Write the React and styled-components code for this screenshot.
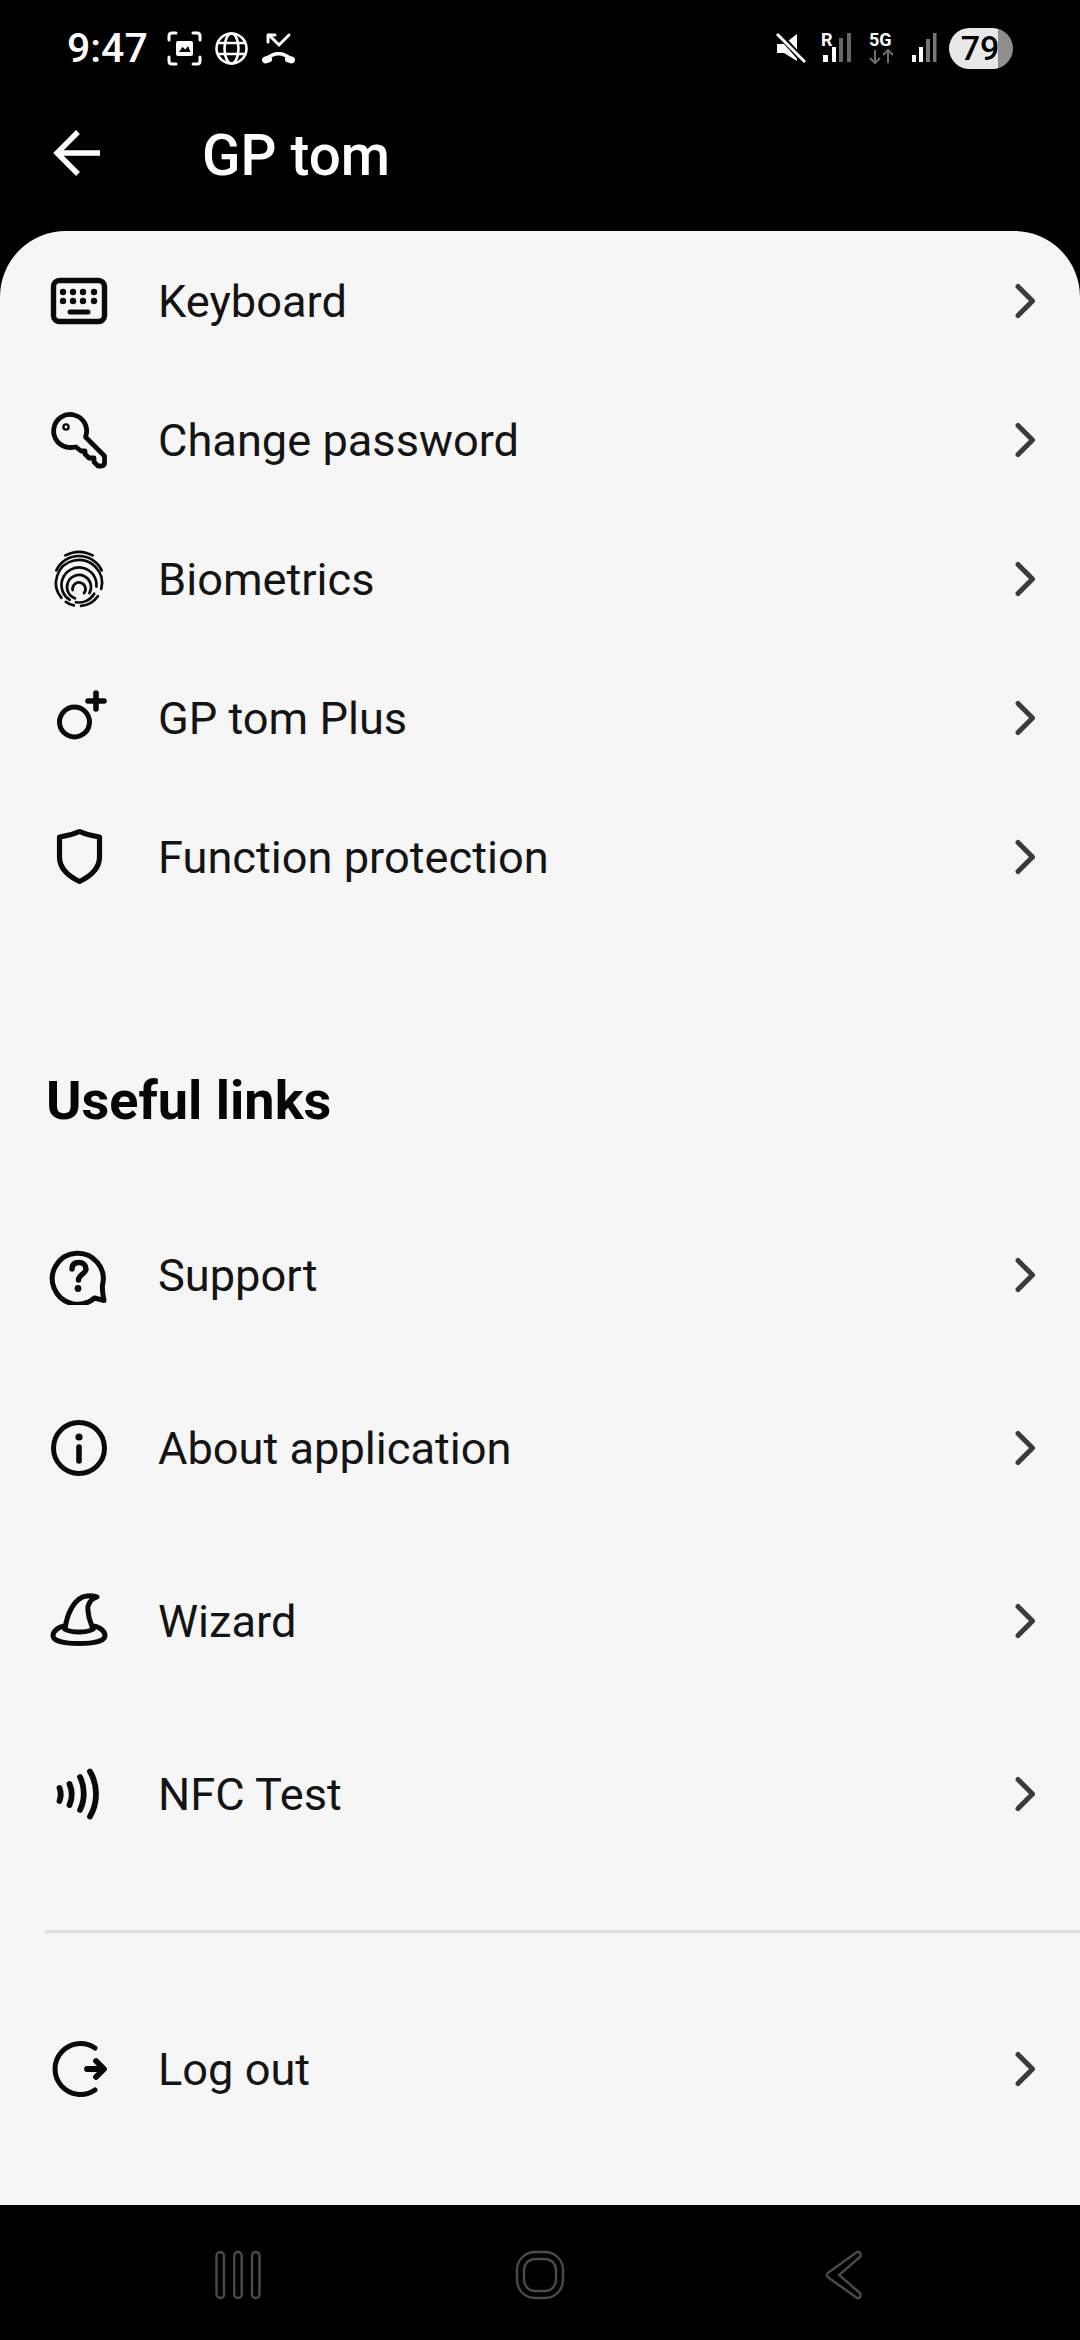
import React from "react";
import styled, { createGlobalStyle } from "styled-components";

const Global = createGlobalStyle`
  html, body { margin: 0; padding: 0; background: #000; }
  * { box-sizing: border-box; }
`;

const Screen = styled.div`
  width: 1080px;
  height: 2340px;
  background: #000;
  display: flex;
  flex-direction: column;
  font-family: Roboto, "Liberation Sans", sans-serif;
  overflow: hidden;
`;

const StatusBar = styled.div`
  height: 96px;
  padding: 0 67px;
  display: flex;
  align-items: center;
  justify-content: space-between;
  color: #fff;
`;

const StatusGroup = styled.div`
  display: flex;
  align-items: center;
  gap: ${(p) => p.$gap}px;
`;

const Time = styled.span`
  font-size: 41px;
  font-weight: 500;
  margin-right: 6px;
`;

const Battery = styled.div`
  width: 64px;
  height: 41px;
  border-radius: 21px;
  background: linear-gradient(90deg, #e8e8e8 0 49px, #8e8e8e 49px);
  color: #000;
  font-size: 34px;
  font-weight: 500;
  display: flex;
  align-items: center;
  justify-content: center;
  padding-right: 2px;
  margin-left: -3px;
`;

const AppBar = styled.div`
  height: 135px;
  padding: 0 0 22px 53px;
  display: flex;
  align-items: center;
  color: #fff;
`;

const Title = styled.h1`
  font-size: 56.5px;
  font-weight: 500;
  margin: 7px 0 0 101px;
  line-height: 1;
`;

const Sheet = styled.div`
  height: 1974px;
  background: #f6f6f6;
  border-radius: 66px 66px 0 0;
  display: flex;
  flex-direction: column;
`;

const Row = styled.div`
  height: ${(p) => p.$h}px;
  padding: 0 41px 0 49px;
  display: flex;
  align-items: center;
  flex-shrink: 0;
`;

const Spacer = styled.div`
  height: ${(p) => p.$h}px;
  flex-shrink: 0;
`;

const IconBox = styled.div`
  width: 60px;
  height: 60px;
  flex-shrink: 0;
  margin-right: 49px;
  svg { display: block; }
`;

const Label = styled.span`
  flex: 1;
  font-size: 45.2px;
  color: #141414;
  line-height: 1;
  padding-top: 2px;
`;

const Heading = styled.h2`
  height: 140px;
  margin: 0;
  padding: 0 0 2px 46px;
  display: flex;
  align-items: center;
  font-size: 54px;
  font-weight: 700;
  color: #050505;
  flex-shrink: 0;
`;

const Divider = styled.div`
  height: 3px;
  margin-left: 45px;
  background: #dfdfdf;
  flex-shrink: 0;
`;

const NavBar = styled.div`
  flex: 1;
  display: flex;
  align-items: center;
  gap: 254px;
  padding: 5px 0 0 215px;
`;

const Chevron = () => (
  <svg width="30" height="42" viewBox="0 0 30 42" fill="none" stroke="#3a3a3a" strokeWidth="5" strokeLinecap="round" strokeLinejoin="round">
    <path d="M9 6.5 L23.5 21 L9 35.5" />
  </svg>
);

const Ico = ({ children }) => (
  <svg width="60" height="60" viewBox="0 0 60 60" fill="none" stroke="#0a0a0a" strokeWidth="5" strokeLinecap="round" strokeLinejoin="round">
    {children}
  </svg>
);

// arc path on a circle, angles in degrees, clockwise on screen
const arc = (cx, cy, r, a0, a1) => {
  const pt = (a) => {
    const t = (a * Math.PI) / 180;
    return `${(cx + r * Math.cos(t)).toFixed(2)} ${(cy + r * Math.sin(t)).toFixed(2)}`;
  };
  return `M${pt(a0)} A${r} ${r} 0 ${a1 - a0 > 180 ? 1 : 0} 1 ${pt(a1)}`;
};

const KeyboardIcon = () => (
  <Ico>
    <rect x="4.5" y="9.5" width="51" height="41" rx="6" strokeWidth="5.4" />
    <g fill="#0a0a0a" stroke="none">
      {[14, 24, 34, 45].map((x) => (
        <React.Fragment key={x}>
          <circle cx={x} cy="21" r="3.2" />
          <circle cx={x} cy="30" r="3.2" />
        </React.Fragment>
      ))}
    </g>
    <path d="M21 41 H39" strokeWidth="5" />
  </Ico>
);

const KeyIcon = () => (
  <Ico>
    <path d="M36.5 27 L55.5 46 V53 Q55.5 56 52 56 H49 L45 52 V48 H40 L36 44 V41 H32 L27 37 C24 37.5 22 37.5 21 37.5 A16.5 16.5 0 1 1 36.5 27 Z" strokeWidth="4.8" />
    <circle cx="17" cy="17" r="2.6" strokeWidth="2.4" />
  </Ico>
);

const FingerprintIcon = () => (
  <Ico>
    <g strokeWidth="2.7">
      <path d={arc(30, 32, 29, -118, -62)} />
      <path d={arc(30, 32, 25, -155, -25)} />
      <path d={arc(30, 34, 23, 140, 375)} />
      <path d={arc(30, 34, 23, 35, 85)} />
      <path d={arc(30, 34, 23, 103, 125)} />
      <path d={arc(30, 36, 17.5, 122, 365)} />
      <path d={arc(30, 36, 17.5, 30, 100)} />
      <path d={arc(30, 38, 12, 110, 390)} />
      <path d={arc(30, 40, 6.5, 170, 400)} />
    </g>
  </Ico>
);

const PlusIcon = () => (
  <Ico>
    <circle cx="25.5" cy="34" r="15" />
    <path d="M47 5 V21 M39 13 H55" strokeWidth="5.6" />
  </Ico>
);

const ShieldIcon = () => (
  <Ico>
    <path d="M10.5 10 C18 9 25 7 30.5 4.5 C36 7 43 9 50.5 10 V30 C50.5 42 42 49 30.5 54.5 C19 49 10.5 42 10.5 30 Z" strokeWidth="5.2" />
  </Ico>
);

const SupportIcon = () => (
  <Ico>
    <path d="M55 55.5 L45.5 53 A25.5 25.5 0 1 1 53.5 40 C53 45 54 50 55 55.5 Z" strokeWidth="5" />
    <path d="M23 24 C23 19 26 17.5 30 17.5 C34 17.5 37 20 37 24 C37 29 29.5 29.5 29.5 35" strokeWidth="5.4" />
    <circle cx="29" cy="43.5" r="3.4" fill="#0a0a0a" stroke="none" />
  </Ico>
);

const InfoIcon = () => (
  <Ico>
    <circle cx="30" cy="30" r="25.5" />
    <circle cx="30" cy="19" r="3.6" fill="#0a0a0a" stroke="none" />
    <path d="M30 29 V43" strokeWidth="5.6" />
  </Ico>
);

const WizardIcon = () => (
  <Ico>
    <path d="M16 38 C18 22 26 6 38 5 C42 4.5 46 5 48 6 C42 8 38 13 39 20 C39.5 28 42 32 44 38" />
    <path d="M16 35 C8 36 4 41 4 44.5 C4 50 15 52.5 30 52.5 C45 52.5 56 50 56 44.5 C56 41 52 36 44 35" />
    <path d="M16 38 C22 42 38 42 44 38" />
  </Ico>
);

const NfcIcon = () => (
  <Ico>
    <g strokeWidth="5.8">
      <path d="M10.5 24 C12 28 12 33 10.5 37" />
      <path d="M20.5 20 C23.5 27 23.5 34 20.5 41" />
      <path d="M31 13 C36 23 36 36 31 46" />
      <path d="M41 7.5 C49 21 49 39 41 52.5" />
    </g>
  </Ico>
);

const LogoutIcon = () => (
  <Ico>
    <path d="M46 9 A25.5 25.5 0 1 0 46 51" />
    <path d="M38 30 H54 M47 22 L55 30 L47 38" strokeWidth="5.8" />
  </Ico>
);

const top = [
  { label: "Keyboard", icon: <KeyboardIcon /> },
  { label: "Change password", icon: <KeyIcon /> },
  { label: "Biometrics", icon: <FingerprintIcon /> },
  { label: "GP tom Plus", icon: <PlusIcon /> },
  { label: "Function protection", icon: <ShieldIcon /> },
];

const links = [
  { label: "Support", icon: <SupportIcon /> },
  { label: "About application", icon: <InfoIcon /> },
  { label: "Wizard", icon: <WizardIcon /> },
  { label: "NFC Test", icon: <NfcIcon /> },
];

const MenuRow = ({ label, icon, h }) => (
  <Row $h={h}>
    <IconBox>{icon}</IconBox>
    <Label>{label}</Label>
    <Chevron />
  </Row>
);

export default function App() {
  return (
    <Screen>
      <Global />
      <StatusBar>
        <StatusGroup $gap={13}>
          <Time>9:47</Time>
          <svg width="35" height="35" viewBox="0 0 35 35" fill="none" stroke="#fff" strokeWidth="3" strokeLinecap="round">
            <path d="M2 9 V5 Q2 2 5 2 H9 M26 2 H30 Q33 2 33 5 V9 M33 26 V30 Q33 33 30 33 H26 M9 33 H5 Q2 33 2 30 V26" />
            <rect x="9" y="10" width="17" height="15" rx="2" fill="#fff" stroke="none" />
            <path d="M12 21 L15.5 16 L18.5 18.5 L21 15 L23.5 21 Z" fill="#000" stroke="none" />
          </svg>
          <svg width="33" height="33" viewBox="0 0 33 33" fill="none" stroke="#fff" strokeWidth="2.6">
            <circle cx="16.5" cy="16.5" r="15" />
            <ellipse cx="16.5" cy="16.5" rx="7" ry="15" />
            <path d="M3 11 H30 M3 22 H30" />
          </svg>
          <svg width="35" height="33" viewBox="0 0 35 33" fill="none" stroke="#fff" strokeWidth="3" strokeLinecap="round">
            <path d="M8 3 L18 13 L28 3" />
            <path d="M7 3 V10 M7 3 H14" />
            <path d="M6 27 C12 20 23 20 29 27" strokeWidth="3.6" />
            <path d="M4.5 28 L7.5 27 M27.5 27 L30.5 28" strokeWidth="7" />
          </svg>
        </StatusGroup>
        <StatusGroup $gap={15}>
          <svg width="30" height="34" viewBox="0 0 30 34">
            <path d="M1 13 H8 L21 3 V30 L8 22 H1 Z" fill="#fff" />
            <path d="M1 1 L30 33" stroke="#000" strokeWidth="6" />
            <path d="M1 3 L29 31" stroke="#fff" strokeWidth="3" />
          </svg>
          <svg width="33" height="46" viewBox="0 -6 33 46">
            <text x="0" y="15" fill="#fff" fontSize="18" fontWeight="700" fontFamily="Roboto">R</text>
            <rect x="2" y="24" width="5" height="7" fill="#fff" />
            <rect x="11" y="16" width="4" height="15" fill="#fff" />
            <rect x="18" y="7" width="4" height="24" fill="#666" />
            <rect x="26" y="2" width="4" height="29" fill="#666" />
          </svg>
          <svg width="27" height="46" viewBox="0 -6 27 46" fill="none" stroke="#6e6e6e" strokeWidth="2">
            <text x="0" y="15" fill="#fff" stroke="none" fontSize="18" fontWeight="700" fontFamily="Roboto">5G</text>
            <path d="M6 19 V32 M1 27 L6 32 L11 27 M19 32 V19 M14 24 L19 19 L24 24" />
          </svg>
          <svg width="26" height="34" viewBox="0 0 26 34">
            <rect x="1" y="24" width="4" height="7" fill="#fff" />
            <rect x="8" y="16" width="4" height="15" fill="#fff" />
            <rect x="15" y="8" width="4" height="23" fill="#777" />
            <rect x="22" y="2" width="3.5" height="29" fill="#777" />
          </svg>
          <Battery>79</Battery>
        </StatusGroup>
      </StatusBar>
      <AppBar>
        <svg width="48" height="48" viewBox="0 0 48 48" fill="none" stroke="#fff" strokeWidth="5.4">
          <path d="M47 24 H5 M25 3 L4 24 L25 45" />
        </svg>
        <Title>GP tom</Title>
      </AppBar>
      <Sheet>
        {top.map((r) => (
          <MenuRow key={r.label} {...r} h={139} />
        ))}
        <Spacer $h={105} />
        <Heading>Useful links</Heading>
        <Spacer $h={17} />
        {links.map((r) => (
          <MenuRow key={r.label} {...r} h={173} />
        ))}
        <Spacer $h={50} />
        <Divider />
        <Spacer $h={49} />
        <MenuRow label="Log out" icon={<LogoutIcon />} h={173} />
      </Sheet>
      <NavBar>
        <svg width="46" height="50" viewBox="0 0 46 50" fill="none" stroke="#4a4a4a" strokeWidth="2.4">
          <rect x="1.5" y="2" width="7.5" height="46" rx="3.7" />
          <rect x="19.2" y="2" width="7.5" height="46" rx="3.7" />
          <rect x="37" y="2" width="7.5" height="46" rx="3.7" />
        </svg>
        <svg width="50" height="50" viewBox="0 0 50 50" fill="none" stroke="#4a4a4a" strokeWidth="2.4">
          <rect x="2" y="2" width="46" height="46" rx="18" />
          <rect x="9" y="9" width="32" height="32" rx="11" />
        </svg>
        <svg width="43" height="50" viewBox="0 0 43 50" fill="none" stroke="#4a4a4a" strokeWidth="2.4">
          <path d="M38 2 C40 1 43 4 41 7 L20 25 L41 43 C43 46 40 49 38 48 L10 28 C7 26 7 24 10 22 Z" />
        </svg>
      </NavBar>
    </Screen>
  );
}
